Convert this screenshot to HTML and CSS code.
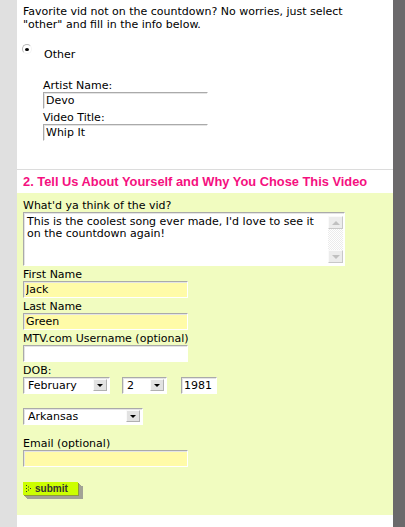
FILE: index.html
```html
<!DOCTYPE html>
<html lang="en">
<head>
  <meta charset="UTF-8" />
  <meta name="viewport" content="width=device-width, initial-scale=1.0"/>
  <title>Countdown Vote</title>
  <link rel="stylesheet" href="styles.css">
</head>
<body>
  <div class="gutter"></div>
  <div class="page">
    <div class="pick">
      <p class="intro">Favorite vid not on the countdown? No worries, just select "other" and fill in the info below.</p>
      <label class="choice">
        <input type="radio" name="vid" value="other" checked />
        <span>Other</span>
      </label>
      <div class="other-fields">
        <label class="field-label" for="artist">Artist Name:</label>
        <input class="field" type="text" id="artist" value="Devo" />
        <label class="field-label" for="title">Video Title:</label>
        <input class="field" type="text" id="title" value="Whip It" />
      </div>
    </div>

    <h3 class="step-title">2. Tell Us About Yourself and Why You Chose This Video</h3>

    <div class="about">
      <label class="field-label" for="comment">What'd ya think of the vid?</label>
      <div class="comment">
        <textarea id="comment" class="comment-text">This is the coolest song ever made, I'd love to see it on the countdown again!</textarea>
        <div class="scroll">
          <span class="scroll-btn"><span class="arrow-up"></span></span>
          <span class="scroll-track"></span>
          <span class="scroll-btn"><span class="arrow-down"></span></span>
        </div>
      </div>

      <label class="field-label" for="first">First Name</label>
      <input class="field required" type="text" id="first" value="Jack" />
      <label class="field-label" for="last">Last Name</label>
      <input class="field required" type="text" id="last" value="Green" />
      <label class="field-label" for="username">MTV.com Username (optional)</label>
      <input class="field" type="text" id="username" value="" />

      <label class="field-label">DOB:</label>
      <div class="dob">
        <span class="select month">
          <select>
            <option>January</option>
            <option selected>February</option>
            <option>March</option>
          </select>
          <span class="select-btn"></span>
        </span>
        <span class="select day">
          <select>
            <option>1</option>
            <option selected>2</option>
            <option>3</option>
          </select>
          <span class="select-btn"></span>
        </span>
        <input class="field year" type="text" value="1981" />
      </div>

      <span class="select state">
        <select>
          <option>Alabama</option>
          <option selected>Arkansas</option>
          <option>Arizona</option>
        </select>
        <span class="select-btn"></span>
      </span>

      <label class="field-label email-label" for="email">Email (optional)</label>
      <input class="field required" type="text" id="email" value="" />

      <button class="submit" type="button">
        <svg width="5" height="7" viewBox="0 0 5 7">
          <rect x="0" y="0" width="1" height="1" fill="#333"/>
          <rect x="0" y="3" width="1" height="1" fill="#333"/>
          <rect x="0" y="6" width="1" height="1" fill="#333"/>
          <rect x="2" y="1.5" width="1" height="1" fill="#333"/>
          <rect x="2" y="4.5" width="1" height="1" fill="#333"/>
          <rect x="4" y="3" width="1" height="1" fill="#333"/>
        </svg>
        submit
      </button>
    </div>
  </div>
  <div class="rail"></div>
</body>
</html>
```
FILE: styles.css
```css
body {
  margin: 0;
  display: flex;
  min-height: 100vh;
  font-family: "DejaVu Sans", Verdana, sans-serif;
  font-size: 11px;
  color: #000;
  background: #fff;
}
.gutter {
  width: 17px;
  background: #e0e0e0;
}
.rail {
  width: 12px;
  background: #6b696b;
}
.page {
  width: 376px;
  background: #fff;
}

/* step 1 - other video */
.pick {
  padding: 5px 6px 25px;
  border-bottom: 1px solid #dcdcdc;
}
.intro {
  margin: 0 24px 0 0;
  line-height: 13px;
}
.choice {
  display: flex;
  align-items: flex-start;
  margin-top: 17px;
  line-height: 13px;
}
.choice input {
  appearance: none;
  width: 10px;
  height: 10px;
  margin: -4px 12px 0 -1px;
  border-radius: 50%;
  border: 1px solid;
  border-color: #b8b8b8 #f4f4f4 #f4f4f4 #b8b8b8;
  background: #fff;
  position: relative;
}
.choice input:checked::after {
  content: "";
  position: absolute;
  left: 2px;
  top: 3px;
  width: 4px;
  height: 3px;
  border-radius: 50%;
  background: #000;
}
.other-fields {
  padding-left: 20px;
  margin-top: 19px;
}
.field-label {
  display: block;
  line-height: 12px;
}
.field {
  display: block;
  box-sizing: border-box;
  width: 165px;
  height: 17px;
  margin: 0 0 3px;
  padding: 0 2px;
  border: 1px solid;
  border-color: #aaa #fff #fff #aaa;
  box-shadow: inset 1px 1px 0 #e4e4e4;
  background: #fff;
  font: 11px "DejaVu Sans", Verdana, sans-serif;
  color: #000;
}
.field.required {
  background: #fffba8;
}

/* step 2 */
.step-title {
  margin: 0;
  padding: 4px 6px;
  font: bold 12.85px/15px "Liberation Sans", Arial, sans-serif;
  color: #f5107f;
}
.about {
  background: #f1fcc0;
  padding: 7px 6px 20px;
}
.comment {
  display: flex;
  box-sizing: border-box;
  width: 322px;
  height: 54px;
  margin-bottom: 3px;
  border: 1px solid;
  border-color: #aaa #fff #fff #aaa;
  box-shadow: inset 1px 1px 0 #e4e4e4;
  background: #fff;
}
.comment-text {
  flex: 1;
  border: 0;
  resize: none;
  overflow: hidden;
  padding: 3px 3px;
  background: transparent;
  font: 11px/12px "DejaVu Sans", Verdana, sans-serif;
  color: #000;
  outline: none;
}
.scroll {
  display: flex;
  flex-direction: column;
  width: 15px;
  margin: 3px 1px 2px 0;
}
.scroll-btn {
  display: flex;
  align-items: center;
  justify-content: center;
  height: 13px;
  box-sizing: border-box;
  border: 1px solid;
  border-color: #fafafa #c8c8c8 #c8c8c8 #fafafa;
  background: #ececec;
}
.scroll-track {
  flex: 1;
  background: repeating-conic-gradient(#ebebeb 0 25%, #fff 0 50%) 0 0 / 2px 2px;
}
.arrow-up, .arrow-down {
  width: 0;
  height: 0;
  border-left: 4px solid transparent;
  border-right: 4px solid transparent;
}
.arrow-up {
  border-bottom: 4px solid #c0c0c0;
}
.arrow-down {
  border-top: 4px solid #c0c0c0;
}

/* selects */
.dob {
  display: flex;
  gap: 12px;
}
.select {
  position: relative;
  display: inline-block;
  box-sizing: border-box;
  height: 17px;
  border: 1px solid;
  border-color: #aaa #fff #fff #aaa;
  box-shadow: inset 1px 1px 0 #e4e4e4;
  background: #fff;
}
.select select {
  appearance: none;
  width: 100%;
  height: 15px;
  border: 0;
  padding: 0 0 0 4px;
  background: transparent;
  font: 11px "DejaVu Sans", Verdana, sans-serif;
  color: #000;
  outline: none;
}
.select-btn {
  position: absolute;
  top: 1px;
  right: 2px;
  width: 14px;
  height: 12px;
  box-sizing: border-box;
  border: 1px solid;
  border-color: #fafafa #b0b0b0 #b0b0b0 #fafafa;
  background: #e2e2e2;
  pointer-events: none;
}
.select-btn::after {
  content: "";
  position: absolute;
  left: 3px;
  top: 4px;
  border-left: 3px solid transparent;
  border-right: 3px solid transparent;
  border-top: 3px solid #000;
}
.month {
  width: 87px;
}
.day {
  width: 45px;
}
.dob .year {
  width: 36px;
  margin: 0 0 0 2px;
}
.state {
  display: block;
  width: 120px;
  margin-top: 14px;
}
.email-label {
  margin-top: 13px;
}

.submit {
  display: flex;
  align-items: center;
  gap: 4px;
  width: 55px;
  height: 13px;
  margin-top: 15px;
  padding: 0 0 0 3px;
  border: 0;
  background: #ccff00;
  box-shadow: 1px 1px 0 #8f9a3a, 2px 2px 0 #a2a296, 3px 3px 0 #a2a296, 4px 4px 0 #a2a296, 5px 4px 0 #a2a296;
  font: bold 10px "Liberation Sans", Arial, sans-serif;
  color: #333;
  cursor: pointer;
}
```
